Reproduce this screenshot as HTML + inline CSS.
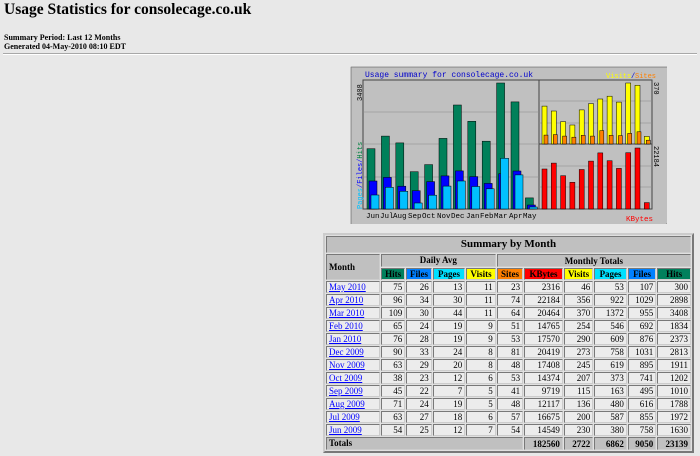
<!DOCTYPE html>
<html><head><style>
body{margin:0;background:#e8e8e8;width:700px;height:456px;overflow:hidden;font-family:"Liberation Serif",serif;color:#000;position:relative}
h1{position:absolute;left:4px;top:1px;margin:0;font-size:15.5px;font-weight:bold}
.sub{position:absolute;left:4px;top:33px;font-size:8px;font-weight:bold;line-height:9px}
.hr{position:absolute;left:3px;right:3px;top:53px;height:0;border-top:1px solid #a8a8a8;border-bottom:1px solid #fff}
svg{position:absolute;left:350px;top:66px}
table{position:absolute;left:323px;top:233px;width:371px;border:2px outset #ccc;border-spacing:1px;table-layout:fixed;font-size:9px;background:#e0e0e0}
td,th{border:1px inset #ccc;padding:0 2px;height:10px;line-height:10px;text-align:right;overflow:hidden;white-space:nowrap}
th{font-weight:bold;text-align:center}
.g{background:#c0c0c0}
td.m{text-align:left}
a{color:#0000ff;text-decoration:underline}
tr.d td{background:#ececec}
</style></head><body>
<h1>Usage Statistics for consolecage.co.uk</h1>
<div class="sub">Summary Period: Last 12 Months<br>Generated 04-May-2010 08:10 EDT</div>
<div class="hr"></div>
<svg width="317" height="158" viewBox="0 0 317 158" font-family="Liberation Mono,monospace">
<rect x="0" y="0" width="317" height="158" fill="#c0c0c0" stroke="#fff" stroke-width="2"/>
<rect x="1" y="1" width="316" height="157" fill="none" stroke="#808080"/>
<rect x="13" y="14" width="176" height="129" fill="#c0c0c0" stroke="#444"/>
<rect x="189" y="14" width="113" height="64" fill="#c0c0c0" stroke="#444"/>
<rect x="189" y="78" width="113" height="65" fill="#c0c0c0" stroke="#444"/>
<g stroke="#888" stroke-width="0.6"><line x1="13" y1="46" x2="189" y2="46"/><line x1="13" y1="78" x2="189" y2="78"/><line x1="13" y1="111" x2="189" y2="111"/><line x1="189" y1="35" x2="302" y2="35"/><line x1="189" y1="57" x2="302" y2="57"/><line x1="189" y1="100" x2="302" y2="100"/><line x1="189" y1="121" x2="302" y2="121"/></g>
<text x="15" y="11" font-size="8" fill="#0000cc">Usage summary for consolecage.co.uk</text>
<text x="256" y="12" font-size="7" fill="#ffff00">Visits</text><text x="281" y="12" font-size="7" fill="#0000cc">/</text><text x="285" y="12" font-size="7" fill="#ff8000">Sites</text>
<text x="276" y="155" font-size="7.5" fill="#ff0000">KBytes</text>
<text transform="translate(12,35) rotate(-90)" font-size="7" fill="#000">3408</text>
<text transform="translate(12,143) rotate(-90)" font-size="7"><tspan fill="#00c0ff">Pages</tspan><tspan fill="#0000ff">/</tspan><tspan fill="#0000ff">Files</tspan><tspan fill="#0000ff">/</tspan><tspan fill="#008040">Hits</tspan></text>
<text transform="translate(304,16) rotate(90)" font-size="7">370</text>
<text transform="translate(304,80) rotate(90)" font-size="7">22184</text>
<g stroke="#000" stroke-width="0.5">
<g fill="#00805a">
<rect x="17" y="82.7" width="8" height="60.3"/><rect x="31.4" y="70.1" width="8" height="72.9"/><rect x="45.8" y="76.9" width="8" height="66.1"/><rect x="60.2" y="105.7" width="8" height="37.3"/><rect x="74.6" y="98.6" width="8" height="44.4"/><rect x="89" y="72.4" width="8" height="70.6"/><rect x="103.4" y="39" width="8" height="104"/><rect x="117.8" y="55.3" width="8" height="87.7"/><rect x="132.2" y="75.2" width="8" height="67.8"/><rect x="146.6" y="17" width="8" height="126"/><rect x="161" y="35.9" width="8" height="107.1"/><rect x="175.4" y="131.9" width="8" height="11.1"/></g>
<g fill="#0000ff">
<rect x="19" y="115" width="8" height="28"/><rect x="33.4" y="111.4" width="8" height="31.6"/><rect x="47.8" y="120.2" width="8" height="22.8"/><rect x="62.2" y="124.7" width="8" height="18.3"/><rect x="76.6" y="115.6" width="8" height="27.4"/><rect x="91" y="109.9" width="8" height="33.1"/><rect x="105.4" y="104.9" width="8" height="38.1"/><rect x="119.8" y="110.6" width="8" height="32.4"/><rect x="134.2" y="117.4" width="8" height="25.6"/><rect x="148.6" y="107.7" width="8" height="35.3"/><rect x="163" y="105" width="8" height="38"/><rect x="177.4" y="139" width="8" height="4"/></g>
<g fill="#00c0ff">
<rect x="21" y="129" width="8" height="14"/><rect x="35.4" y="121.3" width="8" height="21.7"/><rect x="49.8" y="125.3" width="8" height="17.7"/><rect x="64.2" y="137" width="8" height="6"/><rect x="78.6" y="129.2" width="8" height="13.8"/><rect x="93" y="120.1" width="8" height="22.9"/><rect x="107.4" y="115" width="8" height="28"/><rect x="121.8" y="120.5" width="8" height="22.5"/><rect x="136.2" y="122.8" width="8" height="20.2"/><rect x="150.6" y="92.3" width="8" height="50.7"/><rect x="165" y="108.9" width="8" height="34.1"/><rect x="179.4" y="141" width="8" height="2"/></g>
<g fill="#ffff00">
<rect x="192" y="40.1" width="5" height="37.9"/><rect x="201.3" y="45" width="5" height="33"/><rect x="210.6" y="55.6" width="5" height="22.4"/><rect x="219.9" y="59" width="5" height="19"/><rect x="229.2" y="43.9" width="5" height="34.1"/><rect x="238.5" y="37.6" width="5" height="40.4"/><rect x="247.8" y="33" width="5" height="45"/><rect x="257.1" y="30.2" width="5" height="47.8"/><rect x="266.4" y="36.1" width="5" height="41.9"/><rect x="275.7" y="17" width="5" height="61"/><rect x="285" y="19.3" width="5" height="58.7"/><rect x="294.3" y="70.4" width="5" height="7.6"/></g>
<g fill="#ff8000">
<rect x="194" y="69.1" width="4" height="8.9"/><rect x="203.3" y="68.6" width="4" height="9.4"/><rect x="212.6" y="70.1" width="4" height="7.9"/><rect x="221.9" y="71.2" width="4" height="6.8"/><rect x="231.2" y="69.3" width="4" height="8.7"/><rect x="240.5" y="70.1" width="4" height="7.9"/><rect x="249.8" y="64.6" width="4" height="13.4"/><rect x="259.1" y="69.3" width="4" height="8.7"/><rect x="268.4" y="69.6" width="4" height="8.4"/><rect x="277.7" y="67.4" width="4" height="10.6"/><rect x="287" y="65.8" width="4" height="12.2"/><rect x="296.3" y="74.2" width="4" height="3.8"/></g>
<g fill="#ff0000">
<rect x="192" y="103" width="5" height="40"/><rect x="201.3" y="97.1" width="5" height="45.9"/><rect x="210.6" y="109.7" width="5" height="33.3"/><rect x="219.9" y="116.3" width="5" height="26.7"/><rect x="229.2" y="103.5" width="5" height="39.5"/><rect x="238.5" y="95.1" width="5" height="47.9"/><rect x="247.8" y="86.9" width="5" height="56.1"/><rect x="257.1" y="94.7" width="5" height="48.3"/><rect x="266.4" y="102.4" width="5" height="40.6"/><rect x="275.7" y="86.7" width="5" height="56.3"/><rect x="285" y="82" width="5" height="61"/><rect x="294.3" y="136.6" width="5" height="6.4"/></g>
</g>
<g font-size="7.5" fill="#000">
<text x="16" y="152">Jun</text><text x="30" y="152">Jul</text><text x="43" y="152">Aug</text><text x="58" y="152">Sep</text><text x="72" y="152">Oct</text><text x="87" y="152">Nov</text><text x="101" y="152">Dec</text><text x="116" y="152">Jan</text><text x="130" y="152">Feb</text><text x="144" y="152">Mar</text><text x="159" y="152">Apr</text><text x="173" y="152">May</text>
</g>
</svg>
<table>
<colgroup><col style="width:53px"><col style="width:24px"><col style="width:25px"><col style="width:32px"><col style="width:29px"><col style="width:26px"><col style="width:38px"><col style="width:29px"><col style="width:32px"><col style="width:28px"><col style="width:33px"></colgroup>
<tr><th colspan="11" class="g" style="font-size:11px;height:15px;line-height:15px">Summary by Month</th></tr>
<tr><th rowspan="2" class="g" style="text-align:left">Month</th><th colspan="4" class="g" style="height:11px;line-height:11px">Daily Avg</th><th colspan="6" class="g">Monthly Totals</th></tr>
<tr><th style="background:#00805c">Hits</th><th style="background:#0080ff">Files</th><th style="background:#00e0ff">Pages</th><th style="background:#ffff00">Visits</th><th style="background:#ff8000">Sites</th><th style="background:#ff0000">KBytes</th><th style="background:#ffff00">Visits</th><th style="background:#00e0ff">Pages</th><th style="background:#0080ff">Files</th><th style="background:#00805c">Hits</th></tr>
<tr class="d"><td class="m"><a>May 2010</a></td><td>75</td><td>26</td><td>13</td><td>11</td><td>23</td><td>2316</td><td>46</td><td>53</td><td>107</td><td>300</td></tr>
<tr class="d"><td class="m"><a>Apr 2010</a></td><td>96</td><td>34</td><td>30</td><td>11</td><td>74</td><td>22184</td><td>356</td><td>922</td><td>1029</td><td>2898</td></tr>
<tr class="d"><td class="m"><a>Mar 2010</a></td><td>109</td><td>30</td><td>44</td><td>11</td><td>64</td><td>20464</td><td>370</td><td>1372</td><td>955</td><td>3408</td></tr>
<tr class="d"><td class="m"><a>Feb 2010</a></td><td>65</td><td>24</td><td>19</td><td>9</td><td>51</td><td>14765</td><td>254</td><td>546</td><td>692</td><td>1834</td></tr>
<tr class="d"><td class="m"><a>Jan 2010</a></td><td>76</td><td>28</td><td>19</td><td>9</td><td>53</td><td>17570</td><td>290</td><td>609</td><td>876</td><td>2373</td></tr>
<tr class="d"><td class="m"><a>Dec 2009</a></td><td>90</td><td>33</td><td>24</td><td>8</td><td>81</td><td>20419</td><td>273</td><td>758</td><td>1031</td><td>2813</td></tr>
<tr class="d"><td class="m"><a>Nov 2009</a></td><td>63</td><td>29</td><td>20</td><td>8</td><td>48</td><td>17408</td><td>245</td><td>619</td><td>895</td><td>1911</td></tr>
<tr class="d"><td class="m"><a>Oct 2009</a></td><td>38</td><td>23</td><td>12</td><td>6</td><td>53</td><td>14374</td><td>207</td><td>373</td><td>741</td><td>1202</td></tr>
<tr class="d"><td class="m"><a>Sep 2009</a></td><td>45</td><td>22</td><td>7</td><td>5</td><td>41</td><td>9719</td><td>115</td><td>163</td><td>495</td><td>1010</td></tr>
<tr class="d"><td class="m"><a>Aug 2009</a></td><td>71</td><td>24</td><td>19</td><td>5</td><td>48</td><td>12117</td><td>136</td><td>480</td><td>616</td><td>1788</td></tr>
<tr class="d"><td class="m"><a>Jul 2009</a></td><td>63</td><td>27</td><td>18</td><td>6</td><td>57</td><td>16675</td><td>200</td><td>587</td><td>855</td><td>1972</td></tr>
<tr class="d"><td class="m"><a>Jun 2009</a></td><td>54</td><td>25</td><td>12</td><td>7</td><td>54</td><td>14549</td><td>230</td><td>380</td><td>758</td><td>1630</td></tr>
<tr><th colspan="6" class="g" style="text-align:left;height:11px;line-height:11px">Totals</th><th class="g" style="text-align:right">182560</th><th class="g" style="text-align:right">2722</th><th class="g" style="text-align:right">6862</th><th class="g" style="text-align:right">9050</th><th class="g" style="text-align:right">23139</th></tr>
</table>
</body></html>
